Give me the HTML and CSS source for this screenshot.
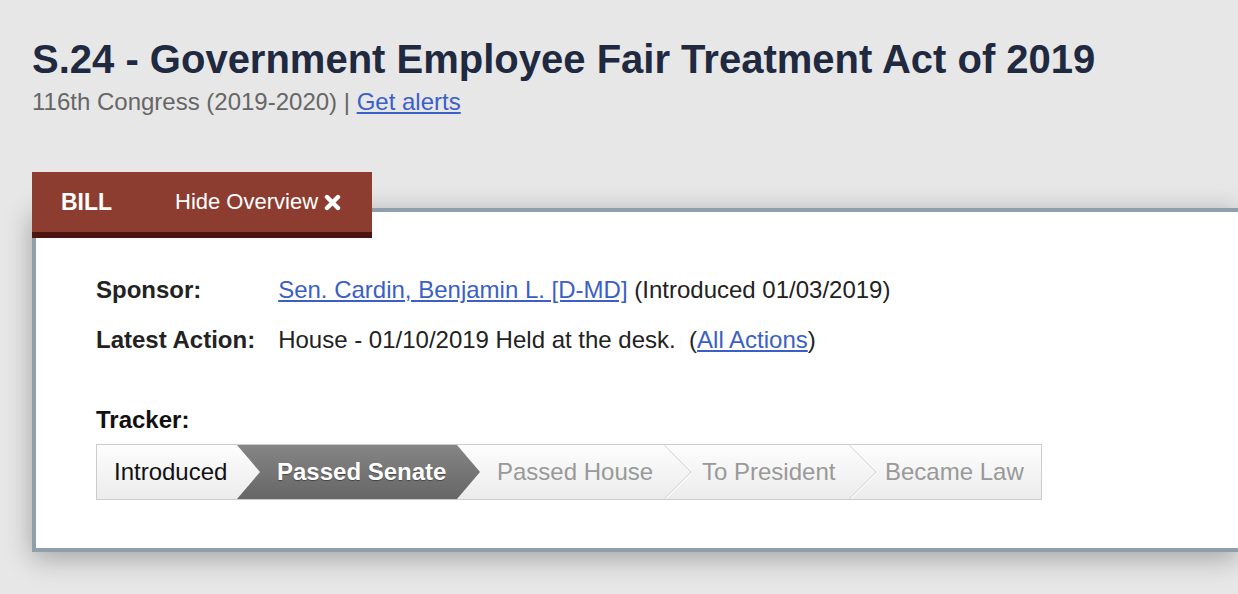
FILE: index.html
```html
<!DOCTYPE html>
<html lang="en">
  <head>
    <meta charset="utf-8" />
    <title>S.24 - Government Employee Fair Treatment Act of 2019</title>
    <link rel="stylesheet" href="styles.css">
  </head>
  <body>
    <main class="page">
      <div class="heading">
        <h1 class="bill-title">S.24 - Government Employee Fair Treatment Act of 2019</h1>
        <div class="congress">116th Congress (2019-2020) | <a href="#">Get alerts</a></div>
      </div>

      <div class="tabs">
        <span class="tab-bill">BILL</span>
        <span class="tab-toggle">Hide Overview
          <svg class="tab-x" width="17" height="17" viewBox="0 0 17 17" aria-hidden="true">
            <path d="M3 3 L14 14 M14 3 L3 14" stroke="#fff" stroke-width="4.4" stroke-linecap="round" fill="none" />
          </svg>
        </span>
      </div>

      <div class="overview">
        <table class="facts">
          <tr>
            <th>Sponsor:</th>
            <td><a href="#">Sen. Cardin, Benjamin L. [D-MD]</a> (Introduced 01/03/2019)</td>
          </tr>
          <tr>
            <th>Latest Action:</th>
            <td>House - 01/10/2019 Held at the desk.&nbsp; (<a href="#">All Actions</a>)</td>
          </tr>
        </table>

        <div class="tracker-label">Tracker:</div>
        <ol class="tracker">
          <li class="step done">Introduced</li>
          <li class="step current">Passed Senate</li>
          <li class="step todo">Passed House</li>
          <li class="step todo sep">To President</li>
          <li class="step todo sep">Became Law</li>
        </ol>
      </div>
    </main>
  </body>
</html>
```

FILE: styles.css
```css
html,
body {
  margin: 0;
  background: #e7e7e7;
  overflow: hidden;
  font-family: "Liberation Sans", Arial, Helvetica, sans-serif;
}
a {
  color: #3b5fc7;
}
.page {
  padding: 0 0 40px 32px;
}
.heading {
  padding-top: 36px;
}
.bill-title {
  margin: 0;
  font-size: 40px;
  line-height: 46px;
  color: #1f2940;
}
.congress {
  margin-top: 6px;
  font-size: 24px;
  line-height: 28px;
  color: #666;
}
.tabs {
  position: relative;
  z-index: 2;
  display: flex;
  align-items: center;
  width: 340px;
  height: 60px;
  margin-top: 56px;
  background: #8d3d30;
  border-bottom: 6px solid #4c1510;
  color: #fff;
  font-size: 22px;
}
.tab-bill {
  padding-left: 29px;
  width: 114px;
  font-size: 23px;
  font-weight: bold;
}
.tab-toggle {
  display: flex;
  align-items: center;
  gap: 6px;
}
.tab-x {
  margin-top: 1px;
}
.overview {
  margin-top: -30px;
  height: 344px;
  background: #fff;
  border: 4px solid #8f9fac;
  border-right: none;
  box-shadow: 0 6px 26px rgba(0, 0, 0, 0.3);
  padding: 53px 0 0 60px;
  box-sizing: border-box;
}
.facts {
  border-collapse: collapse;
  font-size: 24px;
  color: #222;
}
.facts th {
  text-align: left;
  padding: 0 23px 0 0;
  height: 50px;
  vertical-align: middle;
}
.facts td {
  padding: 0;
}
.tracker-label {
  margin-top: 41px;
  font-size: 24px;
  line-height: 28px;
  font-weight: bold;
  color: #111;
}
.tracker {
  display: flex;
  margin: 10px 0 0;
  padding: 0;
  list-style: none;
  width: 944px;
  height: 54px;
  border: 1px solid #ccc;
  background: linear-gradient(#fdfdfd, #ececec);
  overflow: hidden;
  font-size: 24px;
}
.step {
  position: relative;
  display: flex;
  align-items: center;
  box-sizing: border-box;
}
.done {
  width: 140px;
  padding-left: 17px;
  color: #111;
}
.current {
  width: 243px;
  padding-left: 40px;
  font-weight: bold;
  color: #fff;
  text-shadow: 0 1px 1px rgba(0, 0, 0, 0.4);
  background: linear-gradient(#858585, #666);
  clip-path: polygon(0 0, calc(100% - 23px) 0, 100% 50%, calc(100% - 23px) 100%, 0 100%, 23px 50%);
}
.todo {
  color: #999;
  padding-left: 17px;
}
.todo:nth-child(3) {
  width: 182px;
}
.todo:nth-child(4) {
  width: 185px;
  padding-left: 40px;
}
.todo:nth-child(5) {
  padding-left: 38px;
}
.sep::before {
  content: "";
  position: absolute;
  left: -16px;
  top: 8px;
  width: 37px;
  height: 37px;
  border-top: 1px solid #d6d6d6;
  border-right: 1px solid #d6d6d6;
  box-shadow: 1px -1px 0 #fff;
  transform: rotate(45deg);
}
```
